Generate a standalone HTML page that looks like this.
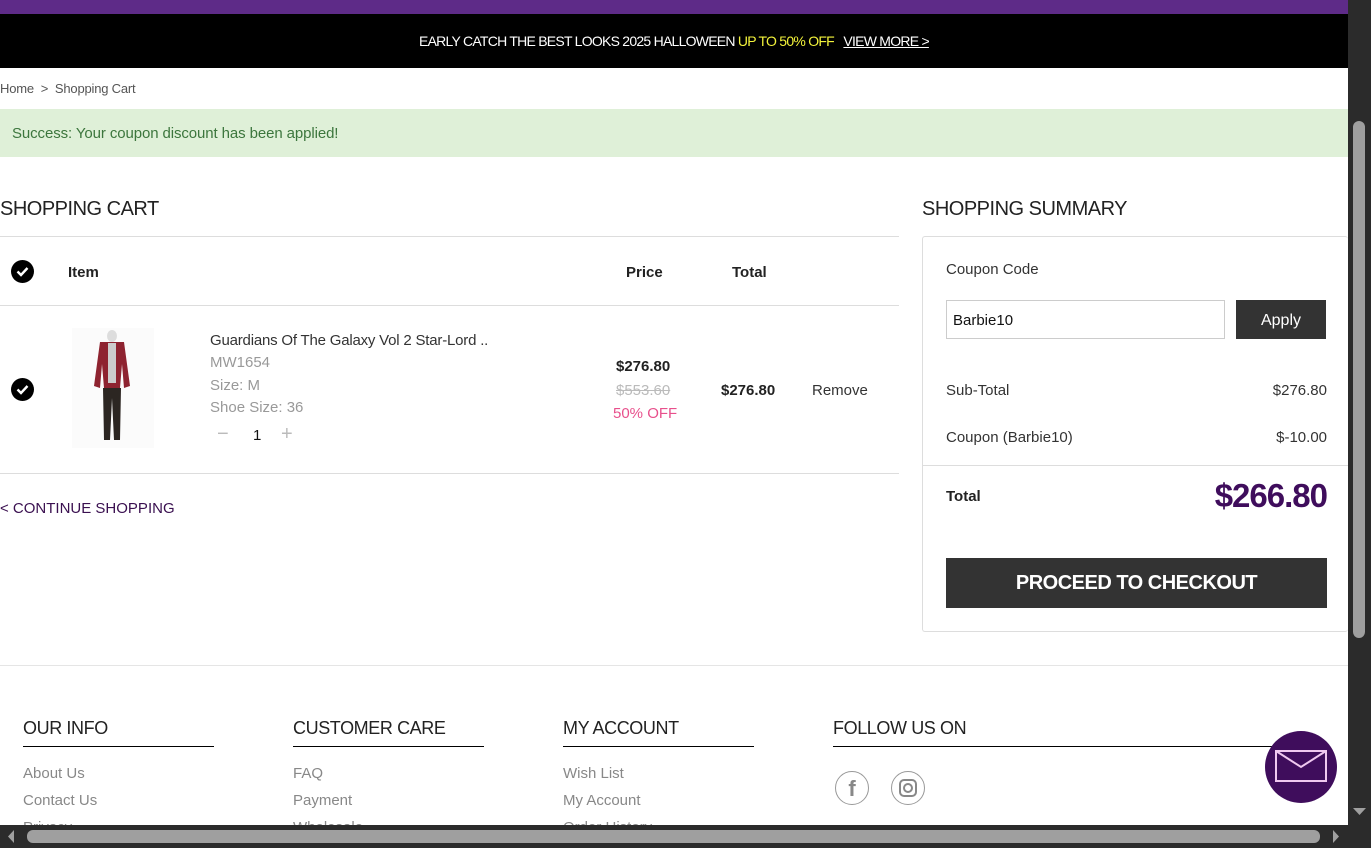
<!DOCTYPE html>
<html><head><meta charset="utf-8"><style>
*{margin:0;padding:0;box-sizing:border-box}
body{width:1371px;height:848px;overflow:hidden;background:#fff;font-family:"Liberation Sans",sans-serif;color:#222;position:relative}
.abs{position:absolute}
.t{position:absolute;white-space:nowrap}
</style></head><body>
<div class="abs" style="left:0;top:0;width:1348px;height:14px;background:#5e2b88"></div>
<div class="abs" style="left:0;top:14px;width:1348px;height:54px;background:#000"></div>
<div class="t" style="left:419px;top:33px;font-size:14px;color:#fff;letter-spacing:-0.75px">EARLY CATCH THE BEST LOOKS 2025 HALLOWEEN <span style="color:#f3f33b">UP TO 50% OFF</span>&nbsp;&nbsp; <span style="text-decoration:underline">VIEW MORE &gt;</span></div>
<div class="t" style="left:0;top:81px;font-size:13px;color:#555;letter-spacing:-0.2px">Home &nbsp;&gt;&nbsp; Shopping Cart</div>
<div class="abs" style="left:0;top:109px;width:1348px;height:48px;background:#dff0d8"></div>
<div class="t" style="left:12px;top:125px;font-size:15px;color:#3c763d;letter-spacing:-0.1px">Success: Your coupon discount has been applied!</div>

<div class="t" style="left:0;top:198px;font-size:20px;color:#222;letter-spacing:-0.5px">SHOPPING CART</div>
<div class="abs" style="left:0;top:236px;width:899px;height:1px;background:#ddd"></div>
<div class="abs" style="left:11px;top:260px;width:23px;height:23px;border-radius:50%;background:#000"></div>
<svg class="abs" style="left:11px;top:260px" width="23" height="23"><path d="M6.5 11.5l3.5 3.5 6.5-7" stroke="#fff" stroke-width="2.4" fill="none"/></svg>
<div class="t" style="left:68px;top:264px;font-size:15px;font-weight:bold">Item</div>
<div class="t" style="left:626px;top:264px;font-size:15px;font-weight:bold">Price</div>
<div class="t" style="left:732px;top:264px;font-size:15px;font-weight:bold">Total</div>
<div class="abs" style="left:0;top:305px;width:899px;height:1px;background:#ddd"></div>
<div class="abs" style="left:11px;top:378px;width:23px;height:23px;border-radius:50%;background:#000"></div>
<svg class="abs" style="left:11px;top:378px" width="23" height="23"><path d="M6.5 11.5l3.5 3.5 6.5-7" stroke="#fff" stroke-width="2.4" fill="none"/></svg>
<svg class="abs" style="left:72px;top:328px" width="82" height="120">
<rect width="82" height="120" fill="#fbfbfb"/>
<ellipse cx="40" cy="8" rx="5" ry="6" fill="#ddd"/>
<path d="M28 14 L52 14 L58 58 L52 60 L50 36 L48 60 L32 60 L30 36 L28 60 L22 58 Z" fill="#8e2330"/>
<rect x="36" y="15" width="8" height="40" fill="#ccc"/>
<path d="M31 60 L49 60 L48 112 L42 112 L40 70 L38 112 L32 112 Z" fill="#2c2622"/>
</svg>
<div class="t" style="left:210px;top:332px;font-size:15px;color:#333;letter-spacing:-0.2px">Guardians Of The Galaxy Vol 2 Star-Lord ..</div>
<div class="t" style="left:210px;top:354px;font-size:15px;color:#999">MW1654</div>
<div class="t" style="left:210px;top:377px;font-size:15px;color:#999">Size: M</div>
<div class="t" style="left:210px;top:399px;font-size:15px;color:#999">Shoe Size: 36</div>
<div class="t" style="left:217px;top:423px;font-size:20px;color:#bbb">−</div>
<div class="t" style="left:253px;top:427px;font-size:15px;color:#111">1</div>
<div class="t" style="left:281px;top:423px;font-size:20px;color:#bbb">+</div>
<div class="t" style="left:616px;top:358px;font-size:15px;font-weight:bold">$276.80</div>
<div class="t" style="left:616px;top:382px;font-size:15px;color:#bbb;text-decoration:line-through">$553.60</div>
<div class="t" style="left:613px;top:405px;font-size:15px;color:#e8508c">50% OFF</div>
<div class="t" style="left:721px;top:382px;font-size:15px;font-weight:bold">$276.80</div>
<div class="t" style="left:812px;top:382px;font-size:15px;color:#333">Remove</div>
<div class="abs" style="left:0;top:473px;width:899px;height:1px;background:#ddd"></div>
<div class="t" style="left:0;top:500px;font-size:15px;color:#3a1050">&lt; CONTINUE SHOPPING</div>

<div class="t" style="left:922px;top:198px;font-size:20px;color:#222;letter-spacing:-0.5px">SHOPPING SUMMARY</div>
<div class="abs" style="left:922px;top:236px;width:426px;height:396px;border:1px solid #ddd;border-right:none;border-radius:3px"></div>
<div class="t" style="left:946px;top:261px;font-size:15px;color:#333">Coupon Code</div>
<div class="abs" style="left:946px;top:300px;width:279px;height:39px;border:1px solid #ccc"></div>
<div class="t" style="left:953px;top:312px;font-size:15px;color:#111">Barbie10</div>
<div class="abs" style="left:1236px;top:300px;width:90px;height:39px;background:#333;color:#fff;font-size:16px;text-align:center;line-height:41px">Apply</div>
<div class="t" style="left:946px;top:382px;font-size:15px;color:#333">Sub-Total</div>
<div class="t" style="right:44px;top:382px;font-size:15px;color:#333">$276.80</div>
<div class="t" style="left:946px;top:429px;font-size:15px;color:#333">Coupon (Barbie10)</div>
<div class="t" style="right:44px;top:429px;font-size:15px;color:#333">$-10.00</div>
<div class="abs" style="left:923px;top:465px;width:425px;height:1px;background:#ddd"></div>
<div class="t" style="left:946px;top:488px;font-size:15px;font-weight:bold">Total</div>
<div class="t" style="right:44px;top:477px;font-size:33px;font-weight:bold;color:#3f0d5c;letter-spacing:-1px">$266.80</div>
<div class="abs" style="left:946px;top:558px;width:381px;height:50px;background:#333;color:#fff;font-size:20px;font-weight:bold;text-align:center;line-height:51px;letter-spacing:-0.5px">PROCEED TO CHECKOUT</div>

<div class="abs" style="left:0;top:665px;width:1348px;height:1px;background:#e5e5e5"></div>
<div class="t" style="left:23px;top:718px;font-size:18px;letter-spacing:-0.4px">OUR INFO</div>
<div class="abs" style="left:23px;top:746px;width:191px;height:1px;background:#000"></div>
<div class="t" style="left:293px;top:718px;font-size:18px;letter-spacing:-0.4px">CUSTOMER CARE</div>
<div class="abs" style="left:293px;top:746px;width:191px;height:1px;background:#000"></div>
<div class="t" style="left:563px;top:718px;font-size:18px;letter-spacing:-0.4px">MY ACCOUNT</div>
<div class="abs" style="left:563px;top:746px;width:191px;height:1px;background:#000"></div>
<div class="t" style="left:833px;top:718px;font-size:18px;letter-spacing:-0.4px">FOLLOW US ON</div>
<div class="abs" style="left:833px;top:746px;width:460px;height:1px;background:#000"></div>
<div class="t" style="left:23px;top:760px;font-size:15px;color:#888;line-height:27px">About Us<br>Contact Us<br>Privacy</div>
<div class="t" style="left:293px;top:760px;font-size:15px;color:#888;line-height:27px">FAQ<br>Payment<br>Wholesale</div>
<div class="t" style="left:563px;top:760px;font-size:15px;color:#888;line-height:27px">Wish List<br>My Account<br>Order History</div>
<div class="abs" style="left:835px;top:771px;width:34px;height:34px;border:1px solid #999;border-radius:50%;color:#888;font-size:22px;font-weight:bold;text-align:center;line-height:33px">f</div>
<div class="abs" style="left:891px;top:771px;width:34px;height:34px;border:1px solid #999;border-radius:50%"></div>
<svg class="abs" style="left:891px;top:771px" width="34" height="34"><rect x="9" y="9" width="16" height="16" rx="4" stroke="#888" stroke-width="2" fill="none"/><circle cx="17" cy="17" r="4" stroke="#888" stroke-width="2" fill="none"/></svg>
<div class="abs" style="left:1265px;top:731px;width:72px;height:72px;border-radius:50%;background:#3f0d5c"></div>
<svg class="abs" style="left:1265px;top:731px" width="72" height="72"><rect x="11" y="20" width="50" height="30" stroke="#f0c8f0" stroke-width="2" fill="none"/><path d="M11 20 L36 36 L61 20" stroke="#f0c8f0" stroke-width="2" fill="none"/></svg>

<div class="abs" style="left:1348px;top:0;width:23px;height:848px;background:#2b2b2b"></div>
<div class="abs" style="left:1353px;top:121px;width:12px;height:517px;background:#9f9f9f;border-radius:6px"></div>
<div class="abs" style="left:0;top:825px;width:1371px;height:23px;background:#2b2b2b"></div>
<div class="abs" style="left:27px;top:830px;width:1293px;height:13px;background:#9f9f9f;border-radius:6px"></div>
<svg class="abs" style="left:0;top:825px" width="1371" height="23"><path d="M14 5 L8 11.5 L14 18Z" fill="#9f9f9f"/><path d="M1333 5 L1339 11.5 L1333 18Z" fill="#9f9f9f"/></svg>
<svg class="abs" style="left:1348px;top:800px" width="23" height="25"><path d="M5 8 L18 8 L11.5 15Z" fill="#9f9f9f"/></svg>
</body></html>
